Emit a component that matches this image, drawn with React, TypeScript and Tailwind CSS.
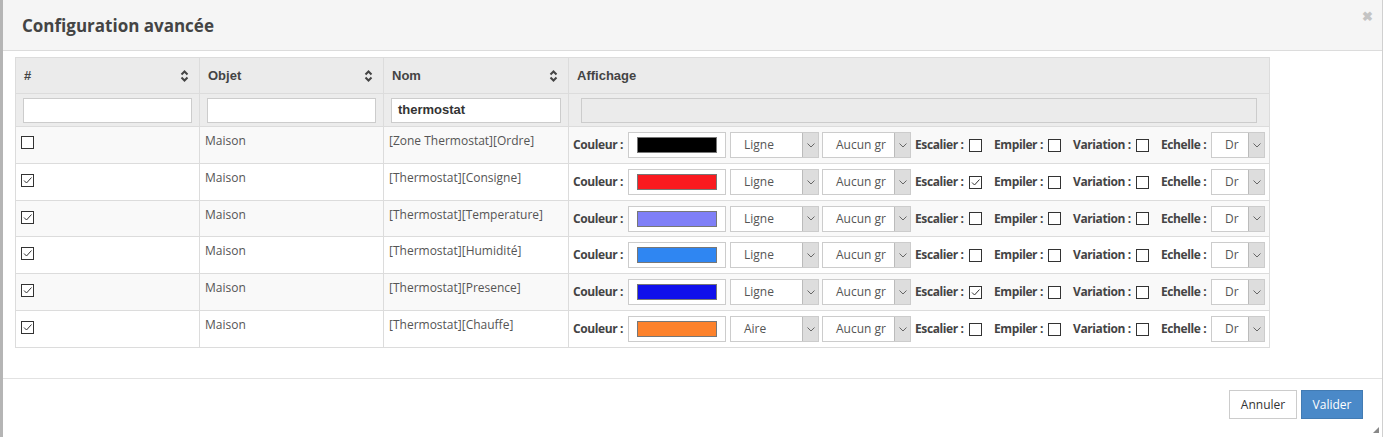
import React from 'react';

const rows = [
  { checked: false, objet: 'Maison', nom: '[Zone Thermostat][Ordre]', color: '#000000', type: 'Ligne', escalier: false, h: 'h-[37px]' },
  { checked: true, objet: 'Maison', nom: '[Thermostat][Consigne]', color: '#fa1a1f', type: 'Ligne', escalier: true, h: 'h-[37px]' },
  { checked: true, objet: 'Maison', nom: '[Thermostat][Temperature]', color: '#7f7ff7', type: 'Ligne', escalier: false, h: 'h-[36px]' },
  { checked: true, objet: 'Maison', nom: '[Thermostat][Humidité]', color: '#2f86f2', type: 'Ligne', escalier: false, h: 'h-[37px]' },
  { checked: true, objet: 'Maison', nom: '[Thermostat][Presence]', color: '#1010ec', type: 'Ligne', escalier: true, h: 'h-[37px]' },
  { checked: true, objet: 'Maison', nom: '[Thermostat][Chauffe]', color: '#fd822c', type: 'Aire', escalier: false, h: 'h-[37px]' },
];

function Check({ checked }: { checked: boolean }) {
  return (
    <span className="inline-flex w-[13px] h-[13px] border border-[#333] bg-white items-center justify-center shrink-0">
      {checked && (
        <svg width="11" height="11" viewBox="0 0 11 11">
          <path d="M2 5.5 L4.5 8 L9.5 2.5" fill="none" stroke="#333" strokeWidth="1" />
        </svg>
      )}
    </span>
  );
}

function SortIcon() {
  return (
    <svg width="9" height="12" viewBox="0 0 9 12" className="ml-auto">
      <path d="M1.5 4.5 L4.5 1.5 L7.5 4.5" fill="none" stroke="#444" strokeWidth="2" />
      <path d="M1.5 7.5 L4.5 10.5 L7.5 7.5" fill="none" stroke="#444" strokeWidth="2" />
    </svg>
  );
}

function Select({ value, width }: { value: string; width: string }) {
  return (
    <div className={`flex h-[26px] border border-[#ccc] bg-white shrink-0 ${width}`}>
      <div className="flex-1 flex items-center pl-[13px] text-[12px] text-[#555] overflow-hidden whitespace-nowrap">{value}</div>
      <div className="w-[16px] bg-[#dddddd] border-l border-[#bbb] flex items-center justify-center">
        <svg width="8" height="5" viewBox="0 0 8 5">
          <path d="M0.5 0.5 L4 4 L7.5 0.5" fill="none" stroke="#666" strokeWidth="1" />
        </svg>
      </div>
    </div>
  );
}

function Label({ text, width }: { text: string; width: string }) {
  return <span className={`font-bold whitespace-nowrap shrink-0 tracking-[-0.4px] ${width}`}>{text}</span>;
}

export default function App() {
  return (
    <div
      className="w-[1385px] h-[437px] bg-white border-l-[3px] border-[#b5b5b5] relative overflow-hidden flex flex-col"
      style={{ fontFamily: '"Open Sans", sans-serif' }}
    >
      <div className="w-[1380px] h-full border-r border-[#d0d0d0] flex flex-col">
        <div className="h-[51px] bg-[#f5f5f5] border-b border-[#dcdcdc] flex items-center pl-[19px] pr-[9px] shrink-0">
          <h3 className="text-[17px] font-bold text-[#444] mt-[2px]">Configuration avancée</h3>
          <span className="ml-auto text-[13px] font-bold text-[#c4c4c4] -mt-[18px] leading-none">✖</span>
        </div>

        <div className="pl-[12px] pt-[6px] h-[327px] shrink-0">
          <table className="border-collapse table-fixed w-[1254px] text-[12px]">
            <colgroup>
              <col className="w-[184px]" />
              <col className="w-[184px]" />
              <col className="w-[185px]" />
              <col className="w-[701px]" />
            </colgroup>
            <thead>
              <tr className="h-[36px] bg-[#ebebeb]" style={{ fontFamily: '"Liberation Sans", Arial, sans-serif' }}>
                {['#', 'Objet', 'Nom'].map((h) => (
                  <th key={h} className="border border-[#dcdcdc] px-[8px] text-left text-[13px] font-bold text-[#444]">
                    <div className="flex items-center pr-[2px]">
                      <span>{h}</span>
                      <SortIcon />
                    </div>
                  </th>
                ))}
                <th className="border border-[#dcdcdc] px-[8px] text-left text-[13px] font-bold text-[#444]">Affichage</th>
              </tr>
              <tr className="h-[33px] bg-[#ececec]">
                <td className="border border-[#dcdcdc] px-[7px]">
                  <div className="h-[25px] bg-white border border-[#ccc]" />
                </td>
                <td className="border border-[#dcdcdc] px-[7px]">
                  <div className="h-[25px] bg-white border border-[#ccc]" />
                </td>
                <td className="border border-[#dcdcdc] px-[7px]">
                  <div
                    className="h-[25px] bg-white border border-[#ccc] flex items-center pl-[6px] text-[13px] font-bold text-[#333]"
                    style={{ fontFamily: '"Liberation Sans", Arial, sans-serif' }}
                  >
                    thermostat
                  </div>
                </td>
                <td className="border border-[#dcdcdc] pl-[12px] pr-[12px]">
                  <div className="h-[25px] bg-[#ebebeb] border border-[#ccc]" />
                </td>
              </tr>
            </thead>
            <tbody>
              {rows.map((r, i) => (
                <tr key={i} className={`${r.h} ${i % 2 === 0 ? 'bg-[#f9f9f9]' : 'bg-white'}`}>
                  <td className="border border-[#dcdcdc] align-top pl-[5px] pt-[9px]">
                    <Check checked={r.checked} />
                  </td>
                  <td className="border border-[#dcdcdc] align-top pl-[5px] pt-[5px] text-[#555]">{r.objet}</td>
                  <td className="border border-[#dcdcdc] align-top pl-[5px] pt-[5px] text-[#555]">{r.nom}</td>
                  <td className="border border-[#dcdcdc] pl-[4px]">
                    <div className="flex items-center text-[12px] text-[#444]">
                      <Label text="Couleur :" width="w-[55px]" />
                      <div className="w-[98px] h-[26px] border border-[#ccc] bg-white flex items-center justify-center shrink-0">
                        <div className="w-[80px] h-[16px] border border-[#777]" style={{ backgroundColor: r.color }} />
                      </div>
                      <div className="ml-[4px]">
                        <Select value={r.type} width="w-[89px]" />
                      </div>
                      <div className="ml-[3px]">
                        <Select value="Aucun gr" width="w-[89px]" />
                      </div>
                      <span className="ml-[4px]" />
                      <Label text="Escalier :" width="w-[54px]" />
                      <Check checked={r.escalier} />
                      <span className="ml-[12px]" />
                      <Label text="Empiler :" width="w-[54px]" />
                      <Check checked={false} />
                      <span className="ml-[12px]" />
                      <Label text="Variation :" width="w-[63px]" />
                      <Check checked={false} />
                      <span className="ml-[12px]" />
                      <Label text="Echelle :" width="w-[50px]" />
                      <Select value="Dr" width="w-[54px]" />
                    </div>
                  </td>
                </tr>
              ))}
            </tbody>
          </table>
        </div>

        <div className="border-t border-[#e2e2e2] flex justify-end pr-[19px] pt-[11px] relative flex-1">
          <button className="h-[29px] w-[68px] border border-[#ccc] bg-white text-[12px] text-[#333]">Annuler</button>
          <button className="h-[29px] w-[62px] ml-[4px] bg-[#4a89c8] border border-[#427bb3] text-[12px] text-white">Valider</button>
          <svg width="6" height="6" viewBox="0 0 6 6" className="absolute right-[3px] bottom-[4px]">
            <path d="M6 0 L6 6 L0 6 Z" fill="#888" />
          </svg>
        </div>
      </div>
    </div>
  );
}
